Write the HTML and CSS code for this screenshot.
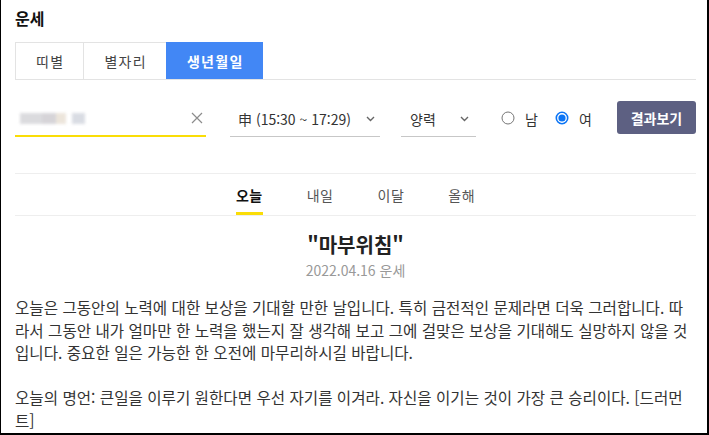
FILE: index.html
```html
<!DOCTYPE html>
<html lang="ko">
<head>
<meta charset="utf-8">
<link rel="stylesheet" href="styles.css">
</head>
<body>
<div class="frame">
  <h1 class="title">운세</h1>
  <div class="tabs">
    <div class="tab">띠별</div>
    <div class="tab">별자리</div>
    <div class="tab active">생년월일</div>
  </div>

  <div class="form">
    <div class="field birth">
      <span class="blur"><i class="b1"></i><i class="b2"></i><i class="b3"></i><i class="b4"></i></span>
      <svg class="clear" width="12" height="12" viewBox="0 0 12 12"><path d="M1 1L11 11M11 1L1 11" stroke="#8c8c8c" stroke-width="1.2" fill="none"/></svg>
    </div>
    <div class="field select time">
      <span>申 (15:30 ~ 17:29)</span>
      <svg class="chev" width="9" height="6" viewBox="0 0 9 6"><path d="M1 1L4.5 4.5L8 1" stroke="#666" stroke-width="1.4" fill="none"/></svg>
    </div>
    <div class="field select cal">
      <span>양력</span>
      <svg class="chev" width="9" height="6" viewBox="0 0 9 6"><path d="M1 1L4.5 4.5L8 1" stroke="#666" stroke-width="1.4" fill="none"/></svg>
    </div>
    <div class="radios">
      <label class="radio">
        <svg width="14" height="14" viewBox="0 0 14 14"><circle cx="7" cy="7" r="6" stroke="#767676" stroke-width="1" fill="#fff"/></svg>
        <span>남</span>
      </label>
      <label class="radio">
        <svg width="14" height="14" viewBox="0 0 14 14"><circle cx="7" cy="7" r="5.7" stroke="#0b74f5" stroke-width="1.6" fill="#fff"/><circle cx="7" cy="7" r="3.6" fill="#0b74f5"/></svg>
        <span>여</span>
      </label>
    </div>
    <button class="submit">결과보기</button>
  </div>

  <div class="periods">
    <div class="period active">오늘</div>
    <div class="period">내일</div>
    <div class="period">이달</div>
    <div class="period">올해</div>
  </div>

  <h2 class="headline">"마부위침"</h2>
  <div class="date">2022.04.16 운세</div>

  <p class="body">오늘은 그동안의 노력에 대한 보상을 기대할 만한 날입니다. 특히 금전적인 문제라면 더욱 그러합니다. 따라서 그동안 내가 얼마만 한 노력을 했는지 잘 생각해 보고 그에 걸맞은 보상을 기대해도 실망하지 않을 것입니다. 중요한 일은 가능한 한 오전에 마무리하시길 바랍니다.<br><br>오늘의 명언: 큰일을 이루기 원한다면 우선 자기를 이겨라. 자신을 이기는 것이 가장 큰 승리이다. [드러먼트]</p>
</div>
</body>
</html>
```

FILE: styles.css
```css
* { box-sizing: border-box; }
html, body { margin: 0; padding: 0; background: #fff; }
body {
  font-family: "Noto Sans CJK KR", "Noto Sans", sans-serif;
  color: #333;
}
.frame {
  width: 709px;
  height: 435px;
  border-left: 1px solid #000;
  border-right: 2px solid #000;
  border-bottom: 2px solid #000;
  padding: 0 11px 0 14px;
  overflow: hidden;
}
.title {
  margin: 0;
  padding-top: 7px;
  font-size: 16px;
  line-height: 22px;
  font-weight: 700;
  color: #111;
}
.tabs {
  display: flex;
  margin-top: 13px;
  border-bottom: 1px solid #e3e3e3;
}
.tab {
  height: 37px;
  padding: 0 19px 0 20px;
  border: 1px solid #e3e3e3;
  border-bottom: none;
  border-right: none;
  font-size: 14px;
  letter-spacing: 1.3px;
  line-height: 36px;
  color: #444;
}
.tab.active {
  background: #4287f5;
  border-color: #4287f5;
  color: #fff;
  font-weight: 700;
}
.form {
  display: flex;
  align-items: center;
  margin-top: 21px;
  height: 36px;
}
.field {
  height: 36px;
  display: flex;
  align-items: center;
  justify-content: space-between;
  font-size: 14px;
  color: #333;
}
.birth {
  width: 191px;
  border-bottom: 2px solid #fadd07;
  padding: 0 3px 0 5px;
}
.blur {
  display: flex;
  align-items: center;
  height: 16px;
  filter: blur(1.4px);
  opacity: 0.75;
}
.blur i { display: block; height: 11px; }
.blur .b1 { width: 22px; background: #d0d0d4; }
.blur .b2 { width: 14px; background: #c9c6cc; }
.blur .b3 { width: 10px; background: #e6ddd0; margin-right: 6px; }
.blur .b4 { width: 13px; background: #cdd1da; }
.select {
  border-bottom: 1px solid #c7c7c7;
}
.time {
  width: 150px;
  margin-left: 24px;
  padding: 0 5px 0 8px;
}
.cal {
  width: 75px;
  margin-left: 21px;
  padding: 0 7px 0 9px;
}
.chev { display: block; }
.radios {
  display: flex;
  gap: 17px;
  margin-left: 25px;
}
.radio {
  display: flex;
  align-items: center;
  gap: 10px;
  font-size: 14px;
  color: #333;
}
.radio svg { display: block; margin-top: -2px; }
.submit {
  margin-left: auto;
  width: 79px;
  height: 33px;
  border: none;
  border-radius: 3px;
  background: #5d6082;
  color: #fff;
  font-family: inherit;
  font-size: 14px;
  font-weight: 700;
  padding: 0;
  margin-top: -3px;
}
.periods {
  display: flex;
  justify-content: center;
  gap: 44px;
  margin-top: 36px;
  border-top: 1px solid #eeeeee;
  border-bottom: 1px solid #eeeeee;
}
.period {
  padding-top: 11px;
  padding-bottom: 7px;
  border-bottom: 3px solid transparent;
  font-size: 14px;
  letter-spacing: 0.5px;
  line-height: 20px;
  color: #555;
}
.period.active {
  border-bottom-color: #fadd07;
  color: #111;
  font-weight: 700;
}
.headline {
  margin: 15px 0 0;
  text-align: center;
  font-size: 20px;
  line-height: 28px;
  font-weight: 700;
  color: #222;
}
.date {
  margin-top: 1px;
  text-align: center;
  font-size: 14px;
  line-height: 20px;
  color: #999;
}
.body {
  margin: 16px 0 0;
  font-size: 15.6px;
  line-height: 22.5px;
  color: #333;
}
```
